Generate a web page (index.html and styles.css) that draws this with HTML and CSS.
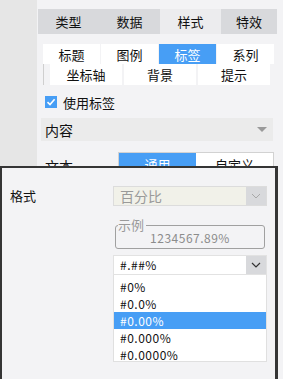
FILE: index.html
```html
<!DOCTYPE html>
<html>

<head>
    <title>
        Chart Style Settings
    </title>
    <link rel="stylesheet" href="styles.css">
</head>

<body>
    <div class="side"></div>

    <section class="panel">
        <nav class="tabs">
            <div class="tab">类型</div>
            <div class="tab">数据</div>
            <div class="tab active">样式</div>
            <div class="tab">特效</div>
        </nav>

        <div class="subtabs">
            <div class="subrow first">
                <div class="subtab">标题</div>
                <div class="subtab">图例</div>
                <div class="subtab on">标签</div>
                <div class="subtab">系列</div>
            </div>
            <div class="subrow second">
                <div class="subtab">坐标轴</div>
                <div class="subtab">背景</div>
                <div class="subtab">提示</div>
            </div>
        </div>

        <label class="check">
            <span class="box">
                <svg width="12" height="12" viewBox="0 0 12 12">
                    <path d="M2.5 6.2 L5 8.6 L9.6 3.2" fill="none" stroke="#fff" stroke-width="1.6" />
                </svg>
            </span>
            使用标签
        </label>

        <div class="bar">
            <span>内容</span>
            <span class="tri"></span>
        </div>

        <div class="textrow">
            <span class="lbl">文本</span>
            <div class="seg">
                <div class="segbtn on">通用</div>
                <div class="segbtn">自定义</div>
            </div>
        </div>
    </section>

    <div class="dialog">
        <div class="form">
            <div class="flabel">格式</div>
            <div class="fields">
                <div class="combo disabled">
                    <span class="val">百分比</span>
                    <span class="arrow">
                        <svg width="10" height="6" viewBox="0 0 10 6">
                            <path d="M1 1 L5 5 L9 1" fill="none" stroke="#a8a8a8" stroke-width="1" />
                        </svg>
                    </span>
                </div>

                <fieldset class="sample">
                    <legend>示例</legend>
                    <div class="sampletext">1234567.89%</div>
                </fieldset>

                <div class="combo edit">
                    <span class="val">#.##%</span>
                    <span class="arrow">
                        <svg width="10" height="6" viewBox="0 0 10 6">
                            <path d="M1 1 L5 5 L9 1" fill="none" stroke="#333" stroke-width="1.2" />
                        </svg>
                    </span>
                </div>
                <ul class="list">
                    <li>#0%</li>
                    <li>#0.0%</li>
                    <li class="sel">#0.00%</li>
                    <li>#0.000%</li>
                    <li>#0.0000%</li>
                </ul>
            </div>
        </div>
    </div>
</body>

</html>
```

FILE: styles.css
```css
body {
    margin: 0;
    width: 283px;
    height: 379px;
    overflow: hidden;
    position: relative;
    display: flex;
    background-color: #f3f3f5;
    font-family: "Noto Sans CJK SC", "DejaVu Sans", sans-serif;
    font-size: 13px;
    color: #111;
}

.side {
    width: 37px;
    flex-shrink: 0;
    background-color: #e6e6e6;
}

.panel {
    flex: 1;
    padding-top: 9px;
}

.tabs {
    display: grid;
    grid-template-columns: 61px 61px 61px 56px;
    margin-left: 1px;
    height: 25px;
}

.tab {
    display: flex;
    align-items: center;
    justify-content: center;
    background-color: #d8d9dc;
    font-size: 13px;
}

.tab.active {
    background-color: #ececee;
}

.subtabs {
    margin-top: 10px;
    margin-left: 6px;
}

.subrow {
    display: flex;
    gap: 1px;
}

.subrow.first {
    width: 231px;
    height: 20px;
}

.subrow.first .subtab {
    flex: 1;
}

.subrow.second {
    height: 21px;
    width: 220px;
    padding-left: 6px;
    border-left: 1px solid #cfcfcf;
    gap: 2px;
}

.subrow.second .subtab {
    flex: 1;
}

.subtab {
    display: flex;
    align-items: center;
    justify-content: center;
    background-color: #fff;
    font-size: 13px;
}

.subtab.on {
    background-color: #479ef5;
    color: #fff;
}

.check {
    display: flex;
    align-items: center;
    gap: 6px;
    margin-top: 10px;
    margin-left: 8px;
    height: 14px;
    font-size: 13px;
}

.box {
    width: 12px;
    height: 12px;
    background-color: #479ef5;
    display: flex;
}

.bar {
    display: flex;
    align-items: center;
    justify-content: space-between;
    margin-top: 9px;
    margin-left: 4px;
    width: 232px;
    height: 23px;
    padding: 0 6px 0 4px;
    box-sizing: border-box;
    background-color: #ebebeb;
    font-size: 14px;
}

.tri {
    width: 0;
    height: 0;
    border-left: 5px solid transparent;
    border-right: 5px solid transparent;
    border-top: 5px solid #9a9a9a;
}

.textrow {
    display: flex;
    margin-top: 11px;
    margin-left: 8px;
}

.lbl {
    width: 73px;
    padding-top: 4px;
    font-size: 14px;
}

.seg {
    display: flex;
    width: 154px;
    height: 22px;
    border: 1px solid #d2d2d2;
}

.segbtn {
    flex: 1;
    display: flex;
    align-items: center;
    justify-content: center;
    background-color: #fff;
    font-size: 13px;
}

.segbtn.on {
    background-color: #479ef5;
    color: #fff;
}

/* overlay window */
.dialog {
    position: absolute;
    left: 0;
    top: 166px;
    width: 278px;
    height: 220px;
    box-sizing: border-box;
    background-color: #f3f3f5;
    border-top: 2px solid #353535;
    border-left: 2px solid #353535;
    border-right: 3px solid #353535;
    padding-top: 18px;
}

.form {
    display: flex;
}

.flabel {
    width: 111px;
    padding-left: 8px;
    box-sizing: border-box;
    height: 20px;
    line-height: 20px;
    font-size: 13px;
}

.fields {
    width: 154px;
}

.combo {
    display: flex;
    height: 20px;
    box-sizing: border-box;
    border: 1px solid #dcdcdc;
}

.combo .val {
    flex: 1;
    padding-left: 6px;
    line-height: 18px;
}

.combo .arrow {
    width: 20px;
    display: flex;
    align-items: center;
    justify-content: center;
    background-color: #d8d9dc;
}

.combo.disabled {
    background-color: #f1f1e9;
    color: #9a9a9a;
    font-size: 14px;
}

.combo.edit {
    background-color: #fff;
    font-size: 12px;
    letter-spacing: 0.5px;
    border-color: #e2e2e2;
}

.sample {
    margin: 14px 2px 6px 2px;
    padding: 0 0 4px 0;
    height: 29px;
    box-sizing: border-box;
    border: 1px solid #a0a0a0;
    border-radius: 3px;
}

.sample legend {
    margin-left: 2px;
    padding: 0 2px 0 0;
    color: #9a9a9a;
    font-size: 13px;
    line-height: 10px;
}

.sampletext {
    text-align: center;
    color: #8c8c8c;
    font-size: 12px;
    letter-spacing: 0.5px;
    line-height: 12px;
    margin-top: 2px;
}

.list {
    list-style: none;
    margin: 0;
    padding: 3px 0 0 0;
    height: 87px;
    box-sizing: border-box;
    background-color: #fff;
    border: 1px solid #e0e0e0;
    border-top: none;
}

.list li {
    height: 17px;
    line-height: 17px;
    padding-left: 6px;
    font-size: 12px;
    letter-spacing: 0.5px;
}

.list li.sel {
    background-color: #479ef5;
    color: #fff;
}
```
